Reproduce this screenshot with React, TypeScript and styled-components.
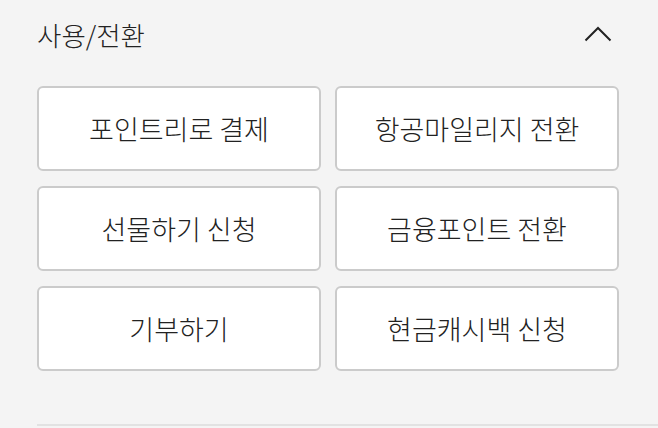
import styled, { createGlobalStyle } from 'styled-components';

const GlobalStyle = createGlobalStyle`
  html, body {
    margin: 0;
    padding: 0;
    background-color: #f4f4f4;
  }

  body {
    font-family: 'Noto Sans CJK KR', 'Noto Sans', sans-serif;
    color: #222;
  }
`;

const Section = styled.section`
  margin-left: 37px;
  padding-bottom: 53px;
  border-bottom: 2px solid #e2e2e2;
`;

const Header = styled.div`
  display: flex;
  justify-content: space-between;
  align-items: center;
  height: 68px;
  padding-right: 46px;
`;

const Title = styled.h2`
  margin: 0;
  font-size: 26.5px;
  font-weight: 300;
  color: #222;
`;

const ToggleButton = styled.button`
  display: flex;
  align-items: center;
  justify-content: center;
  padding: 0;
  border: none;
  background: none;
  cursor: pointer;
`;

const Grid = styled.div`
  display: grid;
  grid-template-columns: repeat(2, 284px);
  grid-auto-rows: 85px;
  column-gap: 14px;
  row-gap: 15px;
  margin-top: 18px;
`;

const OptionButton = styled.button`
  display: flex;
  align-items: center;
  justify-content: center;
  box-sizing: border-box;
  background-color: #fff;
  border: 2px solid #cbcbcb;
  border-radius: 6px;
  font-family: inherit;
  font-size: 27px;
  font-weight: 300;
  color: #222;
  cursor: pointer;
`;

const options = [
  '포인트리로 결제',
  '항공마일리지 전환',
  '선물하기 신청',
  '금융포인트 전환',
  '기부하기',
  '현금캐시백 신청',
];

export default function App() {
  return (
    <>
      <GlobalStyle />
      <Section>
        <Header>
          <Title>사용/전환</Title>
          <ToggleButton aria-label="접기">
            <svg width="28" height="16" viewBox="0 0 28 16" fill="none">
              <polyline
                points="1.5,14.5 14,2 26.5,14.5"
                stroke="#222"
                strokeWidth="2"
              />
            </svg>
          </ToggleButton>
        </Header>
        <Grid>
          {options.map((label) => (
            <OptionButton key={label}>{label}</OptionButton>
          ))}
        </Grid>
      </Section>
    </>
  );
}
